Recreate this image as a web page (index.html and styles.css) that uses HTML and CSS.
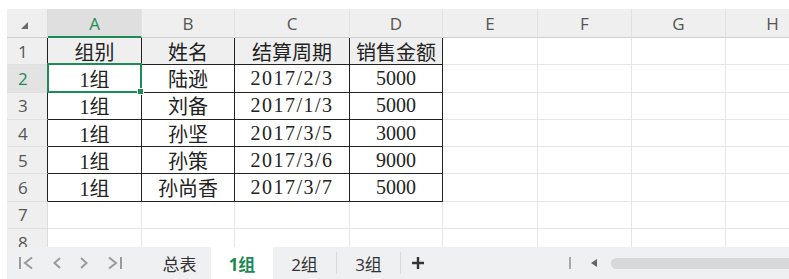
FILE: index.html
```html
<!DOCTYPE html>
<html lang="zh-CN">
<head>
    <meta charset="UTF-8">
    <title>1组</title>
    <link rel="stylesheet" href="styles.css">
</head>
<body>

    <div class="app">
        <div class="sheet">
            <div class="grid">
                <!-- column headers -->
                <div class="corner"><span class="corner-mark"></span></div>
                <div class="col-head current">A</div>
                <div class="col-head">B</div>
                <div class="col-head">C</div>
                <div class="col-head">D</div>
                <div class="col-head">E</div>
                <div class="col-head">F</div>
                <div class="col-head">G</div>
                <div class="col-head">H</div>

                <!-- row 1 -->
                <div class="row-head edge">1</div>
                <div class="cell data title">组别</div>
                <div class="cell data title">姓名</div>
                <div class="cell data title">结算周期</div>
                <div class="cell data title">销售金额</div>
                <div class="cell"></div>
                <div class="cell"></div>
                <div class="cell"></div>
                <div class="cell"></div>

                <!-- row 2 -->
                <div class="row-head edge current">2</div>
                <div class="cell data selected">1组</div>
                <div class="cell data">陆逊</div>
                <div class="cell data date">2017/2/3</div>
                <div class="cell data">5000</div>
                <div class="cell"></div>
                <div class="cell"></div>
                <div class="cell"></div>
                <div class="cell"></div>

                <!-- row 3 -->
                <div class="row-head edge">3</div>
                <div class="cell data">1组</div>
                <div class="cell data">刘备</div>
                <div class="cell data date">2017/1/3</div>
                <div class="cell data">5000</div>
                <div class="cell"></div>
                <div class="cell"></div>
                <div class="cell"></div>
                <div class="cell"></div>

                <!-- row 4 -->
                <div class="row-head edge">4</div>
                <div class="cell data">1组</div>
                <div class="cell data">孙坚</div>
                <div class="cell data date">2017/3/5</div>
                <div class="cell data">3000</div>
                <div class="cell"></div>
                <div class="cell"></div>
                <div class="cell"></div>
                <div class="cell"></div>

                <!-- row 5 -->
                <div class="row-head edge">5</div>
                <div class="cell data">1组</div>
                <div class="cell data">孙策</div>
                <div class="cell data date">2017/3/6</div>
                <div class="cell data">9000</div>
                <div class="cell"></div>
                <div class="cell"></div>
                <div class="cell"></div>
                <div class="cell"></div>

                <!-- row 6 -->
                <div class="row-head edge">6</div>
                <div class="cell data">1组</div>
                <div class="cell data">孙尚香</div>
                <div class="cell data date">2017/3/7</div>
                <div class="cell data">5000</div>
                <div class="cell"></div>
                <div class="cell"></div>
                <div class="cell"></div>
                <div class="cell"></div>

                <!-- row 7 -->
                <div class="row-head">7</div>
                <div class="cell"></div>
                <div class="cell"></div>
                <div class="cell"></div>
                <div class="cell"></div>
                <div class="cell"></div>
                <div class="cell"></div>
                <div class="cell"></div>
                <div class="cell"></div>

                <!-- row 8 -->
                <div class="row-head">8</div>
                <div class="cell"></div>
                <div class="cell"></div>
                <div class="cell"></div>
                <div class="cell"></div>
                <div class="cell"></div>
                <div class="cell"></div>
                <div class="cell"></div>
                <div class="cell"></div>
            </div>
        </div>

        <div class="tabbar">
            <div class="nav">
                <svg class="nav-btn" width="16" height="16" viewBox="0 0 16 16">
                    <path d="M2 2v12" />
                    <path d="M14 2.5L7 8l7 5.5" />
                </svg>
                <svg class="nav-btn" width="8" height="16" viewBox="0 0 8 16">
                    <path d="M7 3L1.5 8 7 13" />
                </svg>
                <svg class="nav-btn" width="8" height="16" viewBox="0 0 8 16">
                    <path d="M1 3l5.5 5L1 13" />
                </svg>
                <svg class="nav-btn" width="16" height="16" viewBox="0 0 16 16">
                    <path d="M2 2.5L9 8l-7 5.5" />
                    <path d="M14 2v12" />
                </svg>
            </div>
            <div class="tabs">
                <div class="tab">总表</div>
                <div class="tab active">1组</div>
                <div class="tab split">2组</div>
                <div class="tab split">3组</div>
                <div class="tab add">
                    <svg width="14" height="14" viewBox="0 0 14 14">
                        <path d="M7 1v12M1 7h12" />
                    </svg>
                </div>
            </div>
            <div class="scroll">
                <span class="scroll-split"></span>
                <span class="scroll-left"></span>
                <span class="scroll-track"></span>
            </div>
        </div>
    </div>

</body>
</html>
```

FILE: styles.css
```css
body {
    margin: 0;
    background: #fff;
    font-family: "Open Sans", "Noto Sans CJK SC", sans-serif;
}
.app {
    width: 789px;
    height: 279px;
    padding: 9px 0 0 7px;
    box-sizing: border-box;
    overflow: hidden;
}
.sheet {
    height: 238px;
    overflow: hidden;
}
.grid {
    display: grid;
    grid-template-columns: 41px 94px 93px 115px 93px 95px 94px 94px 94px;
    grid-template-rows: 29px;
    grid-auto-rows: 27.3px;
}

/* headers */
.corner, .col-head, .row-head {
    background: #efefef;
    box-sizing: border-box;
    color: #555;
    font-size: 17px;
    display: flex;
    align-items: center;
    justify-content: center;
}
.corner {
    border-bottom: 1px solid #cfcfcf;
    border-right: 1px solid #dcdcdc;
    position: relative;
}
.corner-mark {
    position: absolute;
    left: 14px;
    top: 13px;
    width: 0;
    height: 0;
    border-left: 7px solid transparent;
    border-bottom: 7px solid #6b6b6b;
}
.col-head {
    border-bottom: 1px solid #cfcfcf;
    border-right: 1px solid #e2e2e2;
    padding-top: 1px;
}
.col-head.current {
    background: #dfdfdf;
    color: #1d8a58;
    border-bottom: 2px solid #1d8a58;
}
.row-head {
    justify-content: flex-start;
    padding-left: 11px;
    border-bottom: 1px solid #e0e0e0;
    border-right: 1px solid #dcdcdc;
}
.row-head.edge {
    border-right-color: #222;
}
.row-head.current {
    background: #e3e3e3;
    color: #1d8a58;
}

/* cells */
.cell {
    box-sizing: border-box;
    border-right: 1px solid #e6e6e6;
    border-bottom: 1px solid #e6e6e6;
    font-family: "Liberation Serif", "Noto Sans CJK SC", serif;
    font-size: 20px;
    color: #222;
    display: flex;
    align-items: center;
    justify-content: center;
}
.cell.data {
    border-right-color: #222;
    border-bottom-color: #222;
}
.cell.date {
    letter-spacing: 1.5px;
}
.cell.title {
    background: #efefef;
}
.cell.selected {
    position: relative;
}
.cell.selected::after {
    content: "";
    position: absolute;
    left: -1px;
    top: -2px;
    right: -1px;
    bottom: -1px;
    border: 2px solid #1d8a58;
}
.cell.selected::before {
    content: "";
    position: absolute;
    right: -3px;
    bottom: -3px;
    width: 5px;
    height: 5px;
    background: #1d8a58;
    border: 1px solid #fff;
    z-index: 2;
}

/* sheet tabs */
.tabbar {
    height: 32px;
    background: #eff0f1;
    display: flex;
    align-items: stretch;
}
.nav {
    width: 141px;
    display: flex;
    align-items: center;
    gap: 19px;
    padding-left: 11px;
    box-sizing: border-box;
}
.nav-btn path {
    fill: none;
    stroke: #9a9a9a;
    stroke-width: 2;
}
.tabs {
    display: flex;
    align-items: stretch;
}
.tab {
    width: 63px;
    display: flex;
    align-items: center;
    justify-content: center;
    font-size: 17px;
    color: #333;
    box-sizing: border-box;
}
.tab.active {
    width: 62px;
    background: #fff;
    color: #1b8a52;
    font-weight: bold;
}
.tab.split {
    border-right: 1px solid #d9dadb;
    margin: 5px 0;
    width: 64px;
}
.tab.add {
    width: 34px;
}
.tab.add path {
    stroke: #333;
    stroke-width: 2.4;
}
.scroll {
    flex: 1;
    display: flex;
    align-items: center;
    padding-left: 134px;
}
.scroll-split {
    width: 2px;
    height: 12px;
    background: #a9a9a9;
}
.scroll-left {
    margin-left: 20px;
    width: 0;
    height: 0;
    border-top: 4px solid transparent;
    border-bottom: 4px solid transparent;
    border-right: 6px solid #666;
}
.scroll-track {
    margin-left: 14px;
    flex: 1;
    height: 11px;
    border-radius: 6px 0 0 6px;
    background: #d6d8d9;
}
```
